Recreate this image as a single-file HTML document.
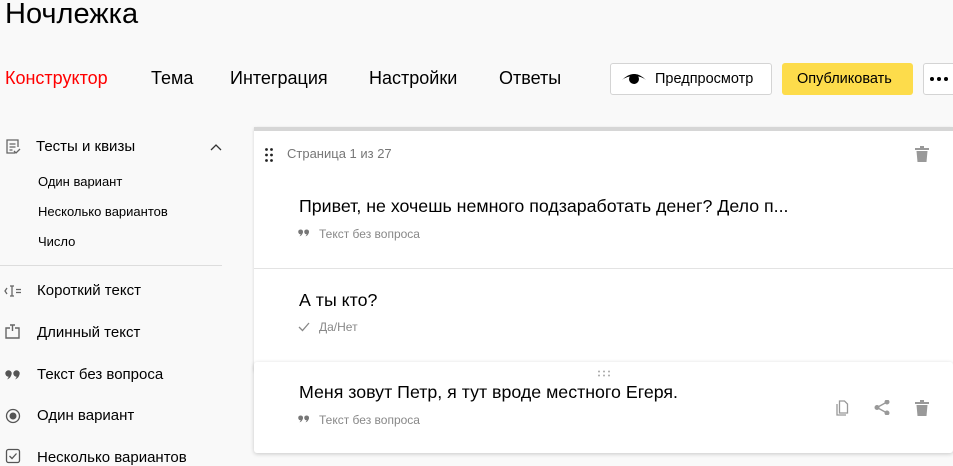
<!DOCTYPE html>
<html><head><meta charset="utf-8"><style>
body{margin:0;width:953px;height:465px;overflow:hidden;background:#f9f9f9;font-family:"Liberation Sans","Noto Sans CJK SC",sans-serif;position:relative;color:#000}
.a{position:absolute;white-space:nowrap}
.nav{font-size:18px;top:68px}
.side{font-size:15px;color:#000}
.sub{font-size:13px}
.ic{position:absolute}
.meta{font-size:12px;color:#888}
.q{font-size:17.8px}
</style></head><body>
<div class="a" style="left:5px;top:-2px;font-size:29px">Ночлежка</div>
<div class="a nav" style="left:5px;color:#f00">Конструктор</div>
<div class="a nav" style="left:151px">Тема</div>
<div class="a nav" style="left:230px">Интеграция</div>
<div class="a nav" style="left:369px">Настройки</div>
<div class="a nav" style="left:499px">Ответы</div>

<div class="a" style="left:610px;top:63px;width:160px;height:30px;border:1px solid #d4d4d4;border-radius:3px;background:#fff"></div>
<svg class="ic" style="left:621px;top:70px" width="26" height="16" viewBox="0 0 26 16"><path d="M1 10 Q13 -2 25 10 Q20 6 13 6 Q6 6 1 10Z" fill="#000"/><circle cx="13" cy="9" r="5" fill="#000"/></svg>
<div class="a" style="left:655px;top:71px;font-size:14.5px">Предпросмотр</div>
<div class="a" style="left:782px;top:63px;width:131px;height:32px;background:#fddc4b;border-radius:3px"></div>
<div class="a" style="left:797px;top:71px;font-size:14.5px">Опубликовать</div>
<div class="a" style="left:923px;top:63px;width:40px;height:30px;border:1px solid #d4d4d4;border-radius:3px;background:#fff"></div>
<svg class="ic" style="left:929px;top:76px" width="22" height="6" viewBox="0 0 22 6" fill="#000"><circle cx="3" cy="3" r="2"/><circle cx="10" cy="3" r="2"/><circle cx="17" cy="3" r="2"/></svg>

<svg class="ic" style="left:5px;top:139px" width="16" height="16" viewBox="0 0 16 16" fill="none" stroke="#666" stroke-width="1.3"><path d="M10 14H2V1h11v7M4.5 5h6M4.5 8h6M4.5 11h3M9 12l2 2 4-4"/></svg>
<div class="a side" style="left:36px;top:138px">Тесты и квизы</div>
<svg class="ic" style="left:209px;top:142px" width="14" height="10" viewBox="0 0 14 10" fill="none" stroke="#333" stroke-width="1.3"><path d="M2 8l5-5 5 5"/></svg>
<div class="a sub" style="left:38px;top:174px">Один вариант</div>
<div class="a sub" style="left:38px;top:204px">Несколько вариантов</div>
<div class="a sub" style="left:38px;top:234px">Число</div>
<div class="a" style="left:0;top:265px;width:222px;height:1px;background:#ddd"></div>
<svg class="ic" style="left:4px;top:284px" width="18" height="14" viewBox="0 0 18 14" fill="none" stroke="#666" stroke-width="1.3"><path d="M3 4L1 7l2 3M6 2h4M8 2v10M6 12h4M12 5.5h5M12 8.5h5"/></svg>
<div class="a side" style="left:37px;top:282px">Короткий текст</div>
<svg class="ic" style="left:5px;top:324px" width="16" height="16" viewBox="0 0 16 16" fill="none" stroke="#666" stroke-width="1.4"><path d="M5 4H1v10h13V4h-4M7.5 1v6M5 1h5"/></svg>
<div class="a side" style="left:37px;top:324px">Длинный текст</div>
<svg class="ic" style="left:5px;top:370px" width="16" height="10" viewBox="0 0 16 10" fill="#555"><circle cx="3.5" cy="3.5" r="3.2"/><path d="M6.5 4Q6 8 2 9.5 4 7 4 5z"/><circle cx="11.5" cy="3.5" r="3.2"/><path d="M14.5 4Q14 8 10 9.5 12 7 12 5z"/></svg>
<div class="a side" style="left:37px;top:366px">Текст без вопроса</div>
<svg class="ic" style="left:5px;top:408px" width="16" height="16" viewBox="0 0 16 16"><circle cx="8" cy="8" r="6.5" fill="none" stroke="#555" stroke-width="1.3"/><circle cx="8" cy="8" r="3.5" fill="#555"/></svg>
<div class="a side" style="left:37px;top:407px">Один вариант</div>
<svg class="ic" style="left:5px;top:448px" width="16" height="16" viewBox="0 0 16 16" fill="none" stroke="#555" stroke-width="1.3"><rect x="1.5" y="1.5" width="13" height="13" rx="2"/><path d="M4.5 8l2.5 2.5 4.5-5"/></svg>
<div class="a side" style="left:37px;top:449px">Несколько вариантов</div>

<div class="a" style="left:254px;top:127px;width:699px;height:240px;background:#fff;border-top:4px solid #d6d6d6;box-shadow:0 1px 3px rgba(0,0,0,.15)"></div>
<svg class="ic" style="left:265px;top:148px" width="8" height="14" viewBox="0 0 8 14" fill="#222"><circle cx="1.5" cy="1.5" r="1.4"/><circle cx="6.5" cy="1.5" r="1.4"/><circle cx="1.5" cy="7" r="1.4"/><circle cx="6.5" cy="7" r="1.4"/><circle cx="1.5" cy="12.5" r="1.4"/><circle cx="6.5" cy="12.5" r="1.4"/></svg>
<div class="a" style="left:287px;top:146px;font-size:13px;color:#777">Страница 1 из 27</div>
<svg class="ic" style="left:915px;top:146px" width="14" height="16" viewBox="0 0 14 16" fill="#999"><rect x="0" y="2" width="14" height="2"/><rect x="5" y="0" width="4" height="2"/><path d="M1.5 5h11l-1 11h-9z"/></svg>
<div class="a q" style="left:299px;top:196px">Привет, не хочешь немного подзаработать денег? Дело п...</div>
<svg class="ic" style="left:298px;top:229px" width="12" height="8" viewBox="0 0 16 10" fill="#777"><circle cx="3.5" cy="3.5" r="3.2"/><path d="M6.5 4Q6 8 2 9.5 4 7 4 5z"/><circle cx="11.5" cy="3.5" r="3.2"/><path d="M14.5 4Q14 8 10 9.5 12 7 12 5z"/></svg>
<div class="a meta" style="left:319px;top:227px">Текст без вопроса</div>
<div class="a" style="left:254px;top:268px;width:699px;height:1px;background:#e3e3e3"></div>
<div class="a q" style="left:299px;top:290px">А ты кто?</div>
<svg class="ic" style="left:298px;top:322px" width="12" height="10" viewBox="0 0 12 10" fill="none" stroke="#888" stroke-width="1.3"><path d="M1 5l3.5 3.5L11 1"/></svg>
<div class="a meta" style="left:319px;top:320px">Да/Нет</div>

<div class="a" style="left:254px;top:362px;width:699px;height:91px;background:#fff;border-radius:3px;box-shadow:0 1px 4px rgba(0,0,0,.2)"></div>
<svg class="ic" style="left:597px;top:370px" width="14" height="7" viewBox="0 0 14 7" fill="#aaa"><circle cx="2" cy="1.5" r="1"/><circle cx="7" cy="1.5" r="1"/><circle cx="12" cy="1.5" r="1"/><circle cx="2" cy="5.5" r="1"/><circle cx="7" cy="5.5" r="1"/><circle cx="12" cy="5.5" r="1"/></svg>
<div class="a q" style="left:299px;top:382px">Меня зовут Петр, я тут вроде местного Егеря.</div>
<svg class="ic" style="left:298px;top:415px" width="12" height="8" viewBox="0 0 16 10" fill="#777"><circle cx="3.5" cy="3.5" r="3.2"/><path d="M6.5 4Q6 8 2 9.5 4 7 4 5z"/><circle cx="11.5" cy="3.5" r="3.2"/><path d="M14.5 4Q14 8 10 9.5 12 7 12 5z"/></svg>
<div class="a meta" style="left:319px;top:413px">Текст без вопроса</div>
<svg class="ic" style="left:835px;top:400px" width="15" height="16" viewBox="0 0 15 16" fill="none" stroke="#999" stroke-width="1.3"><path d="M2 4v11h9"/><path d="M4.5 1h5l3 3v9h-8z"/></svg>
<svg class="ic" style="left:874px;top:400px" width="16" height="15" viewBox="0 0 16 15" fill="#999" stroke="#999" stroke-width="1.4"><path d="M3 7.5L13 2M3 7.5L13 13" fill="none"/><circle cx="3" cy="7.5" r="1.8"/><circle cx="13" cy="2" r="1.8"/><circle cx="13" cy="13" r="1.8"/></svg>
<svg class="ic" style="left:915px;top:400px" width="14" height="16" viewBox="0 0 14 16" fill="#999"><rect x="0" y="2" width="14" height="2"/><rect x="5" y="0" width="4" height="2"/><path d="M1.5 5h11l-1 11h-9z"/></svg>
</body></html>
